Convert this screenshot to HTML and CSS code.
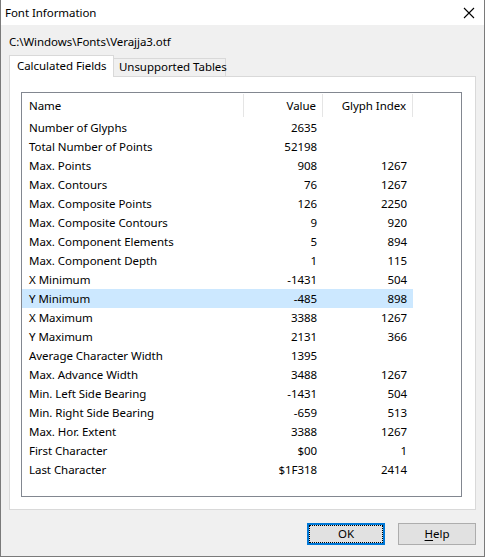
FILE: index.html
```html
<!DOCTYPE html>
<html>
<head>
<meta charset="utf-8">
<link rel="stylesheet" href="styles.css">
</head>
<body>
<div class="window">
  <div class="titlebar">
    <span class="title">Font Information</span>
    <svg class="close" width="12" height="12" viewBox="0 0 12 12"><path d="M1 1 L11 11 M11 1 L1 11" stroke="#000" stroke-width="1.1" fill="none"/></svg>
  </div>
  <div class="content">
    <div class="path">C:\Windows\Fonts\Verajja3.otf</div>
    <div class="tabs">
      <div class="tab active">Calculated Fields</div>
      <div class="tab">Unsupported Tables</div>
    </div>
    <div class="panel">
      <div class="list">
        <div class="row header">
          <div class="c name">Name</div>
          <div class="c val">Value</div>
          <div class="c gi">Glyph Index</div>
        </div>
        <div class="row"><div class="c name">Number of Glyphs</div><div class="c val">2635</div><div class="c gi"></div></div>
        <div class="row"><div class="c name">Total Number of Points</div><div class="c val">52198</div><div class="c gi"></div></div>
        <div class="row"><div class="c name">Max. Points</div><div class="c val">908</div><div class="c gi">1267</div></div>
        <div class="row"><div class="c name">Max. Contours</div><div class="c val">76</div><div class="c gi">1267</div></div>
        <div class="row"><div class="c name">Max. Composite Points</div><div class="c val">126</div><div class="c gi">2250</div></div>
        <div class="row"><div class="c name">Max. Composite Contours</div><div class="c val">9</div><div class="c gi">920</div></div>
        <div class="row"><div class="c name">Max. Component Elements</div><div class="c val">5</div><div class="c gi">894</div></div>
        <div class="row"><div class="c name">Max. Component Depth</div><div class="c val">1</div><div class="c gi">115</div></div>
        <div class="row"><div class="c name">X Minimum</div><div class="c val">-1431</div><div class="c gi">504</div></div>
        <div class="row selected"><div class="c name">Y Minimum</div><div class="c val">-485</div><div class="c gi">898</div></div>
        <div class="row"><div class="c name">X Maximum</div><div class="c val">3388</div><div class="c gi">1267</div></div>
        <div class="row"><div class="c name">Y Maximum</div><div class="c val">2131</div><div class="c gi">366</div></div>
        <div class="row"><div class="c name">Average Character Width</div><div class="c val">1395</div><div class="c gi"></div></div>
        <div class="row"><div class="c name">Max. Advance Width</div><div class="c val">3488</div><div class="c gi">1267</div></div>
        <div class="row"><div class="c name">Min. Left Side Bearing</div><div class="c val">-1431</div><div class="c gi">504</div></div>
        <div class="row"><div class="c name">Min. Right Side Bearing</div><div class="c val">-659</div><div class="c gi">513</div></div>
        <div class="row"><div class="c name">Max. Hor. Extent</div><div class="c val">3388</div><div class="c gi">1267</div></div>
        <div class="row"><div class="c name">First Character</div><div class="c val">$00</div><div class="c gi">1</div></div>
        <div class="row"><div class="c name">Last Character</div><div class="c val">$1F318</div><div class="c gi">2414</div></div>
      </div>
    </div>
    <div class="buttons">
      <div class="btn default"><span class="focus">OK</span></div>
      <div class="btn"><span><u>H</u>elp</span></div>
    </div>
  </div>
</div>
</body>
</html>
```

FILE: styles.css
```css
* { box-sizing: border-box; }
html, body { margin: 0; padding: 0; }
body {
  font-family: "Noto Sans", "Liberation Sans", sans-serif;
  font-size: 11.5px;
  letter-spacing: -0.05px;
  color: #000;
  background: #fff;
}
.window {
  width: 485px;
  height: 557px;
  border: 1px solid #7a7a7a;
  border-top: none;
  background: #f0f0f0;
  display: flex;
  flex-direction: column;
}
.titlebar {
  height: 25px;
  background: #fff;
  display: flex;
  align-items: center;
  justify-content: space-between;
  padding: 0 9px 0 4px;
}
.title { line-height: 16px; }
.close { display: block; margin-top: 1px; }
.content {
  padding: 0 8px;
  display: flex;
  flex-direction: column;
}
.path {
  margin-top: 9px;
  line-height: 16px;
  height: 16px;
}
.tabs {
  margin-top: 5px;
  height: 21px;
  display: flex;
  align-items: flex-end;
}
.tab {
  height: 18px;
  border: 1px solid #d9d9d9;
  border-bottom: none;
  background: #f0f0f0;
  line-height: 16px;
  padding-left: 5px;
  width: 113px;
  margin-left: -1px;
  white-space: nowrap;
}
.tab.active {
  height: 22px;
  width: 105px;
  margin-left: 0;
  margin-bottom: -1px;
  background: #fff;
  position: relative;
  z-index: 1;
  padding-left: 7px;
  line-height: 19px;
}
.panel {
  height: 434px;
  background: #fff;
  border: 1px solid #d9d9d9;
  padding: 15px 13px 12px 11px;
}
.list {
  width: 441px;
  height: 405px;
  border: 1px solid #828790;
  background: #fff;
}
.row {
  display: flex;
  height: 19px;
  line-height: 19px;
  width: 391px;
}
.row.header {
  height: 25px;
  line-height: 24px;
  width: 439px;
}
.row.selected { background: #cce8ff; }
.c { white-space: nowrap; }
.name { width: 222px; padding-left: 7px; }
.val { width: 79px; text-align: right; padding-right: 6px; }
.gi { width: 90px; text-align: right; padding-right: 6px; }
.header .c { border-right: 1px solid #e5e5e5; height: 23px; margin-top: 1px; line-height: 23px; }
.buttons {
  margin-top: 13px;
  display: flex;
  justify-content: flex-end;
  gap: 13px;
}
.btn {
  width: 78px;
  height: 22px;
  border: 1px solid #adadad;
  background: #e1e1e1;
  display: flex;
  align-items: center;
  justify-content: center;
  line-height: 16px;
}
.btn.default {
  border: 2px solid #0078d7;
  padding: 1px;
}
.btn .focus {
  width: 100%;
  height: 100%;
  outline: 1px dotted #000;
  display: flex;
  align-items: center;
  justify-content: center;
}
u { text-decoration: underline; text-underline-offset: 2px; }
```
